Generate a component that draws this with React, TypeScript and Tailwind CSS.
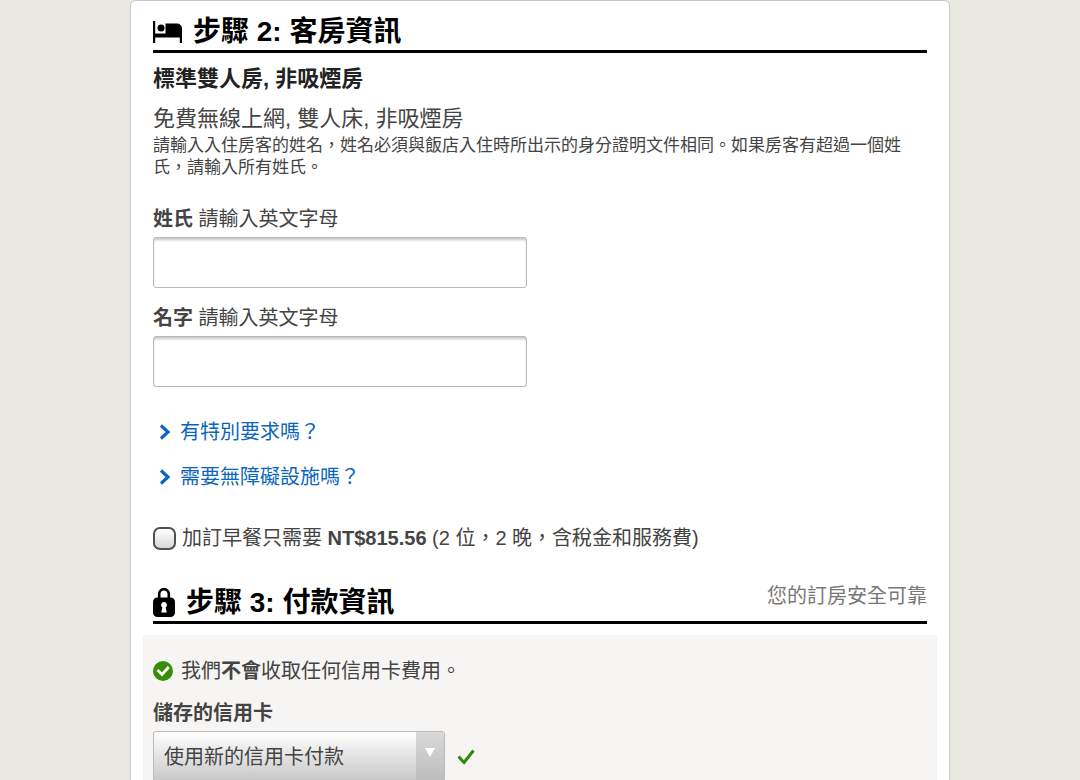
import React, { useState } from 'react';

interface StepHeaderProps {
  icon: React.ReactNode;
  title: string;
  note?: string;
}

interface NameFieldProps {
  id: string;
  label: string;
  value: string;
  onChange: (value: string) => void;
}

const BedIcon = () => (
  <svg viewBox="0 0 29 22" className="w-[29px] h-[22px]" fill="#000" aria-hidden="true">
    <path d="M0 0h2.200v12.500H12.500V2.500H24a5 5 0 0 1 5 5V22h-2.200v-5.500H2.200V22H0z" />
    <circle cx="8" cy="7" r="3.500" />
  </svg>
);

const LockIcon = () => (
  <svg viewBox="0 0 22 29" className="w-[22px] h-[29px]" aria-hidden="true">
    <path d="M6.200 11V6a4.800 4.800 0 0 1 9.600 0v5" fill="none" stroke="#000" strokeWidth="2.600" />
    <rect y="9.500" width="22" height="19.500" rx="4.500" fill="#000" />
    <path d="M11 14a3 3 0 0 1 1.600 5.500l1.200 5H8.200l1.200-5A3 3 0 0 1 11 14z" fill="#fff" />
  </svg>
);

const ChevronIcon = () => (
  <svg viewBox="0 0 12 18" className="w-3 h-[18px]" fill="none" stroke="#0a66bd" strokeWidth="3.200" aria-hidden="true">
    <path d="M2 2.500L9 9l-7 6.500" />
  </svg>
);

const CheckCircleIcon = () => (
  <svg viewBox="0 0 20 20" className="w-5 h-5" aria-hidden="true">
    <circle cx="10" cy="10" r="10" fill="#3a8d0b" />
    <path d="M4.500 9l4.500 4.500L15.800 6" fill="none" stroke="#fff" strokeWidth="2.800" />
  </svg>
);

const CheckIcon = () => (
  <svg viewBox="0 0 18 16" className="w-[18px] h-4" aria-hidden="true">
    <path d="M1.500 7.500l5.500 6L16.500 1.500" fill="none" stroke="#2e8a07" strokeWidth="3" />
  </svg>
);

const StepHeader: React.FC<StepHeaderProps> = ({ icon, title, note }) => (
  <header className="flex items-start justify-between border-b-3 border-black">
    <div className="flex items-center gap-[11px]">
      {icon}
      <h2 className="text-[28px] leading-[37px] font-bold text-black">{title}</h2>
    </div>
    {note && <span className="text-xl leading-6 text-[#777]">{note}</span>}
  </header>
);

const NameField: React.FC<NameFieldProps> = ({ id, label, value, onChange }) => (
  <div>
    <label htmlFor={id} className="block text-xl leading-6">
      <b>{label}</b> 請輸入英文字母
    </label>
    <input
      id={id}
      type="text"
      value={value}
      onChange={(e) => onChange(e.target.value)}
      className="mt-[6px] block h-[51px] w-full max-w-[374px] rounded-[3px] border border-[#b9b9b9] bg-white px-3 text-xl shadow-[inset_0_3px_3px_-1px_#c4c4c4]"
    />
  </div>
);

const ExpandLink: React.FC<{ text: string }> = ({ text }) => (
  <a href="#" className="flex items-center gap-[9px] pl-[6px] text-xl leading-6 text-[#0a66bd]">
    <ChevronIcon />
    {text}
  </a>
);

const App: React.FC = () => {
  const [lastName, setLastName] = useState('');
  const [firstName, setFirstName] = useState('');
  const [breakfast, setBreakfast] = useState(false);

  return (
    <div
      lang="zh-TW"
      className="min-h-screen bg-[#e8e8e0] text-[#444] font-['Liberation_Sans','Noto_Sans_CJK_TC',sans-serif]"
    >
      <main className="mx-auto max-w-[820px] rounded-md border border-[#c8c8c6] bg-white px-[22px] pt-3">
        <section>
          <StepHeader icon={<BedIcon />} title="步驟 2: 客房資訊" />
          <h3 className="mt-3 text-[22px] leading-7 font-bold text-[#222]">標準雙人房, 非吸煙房</h3>
          <p className="mt-3 text-[22px] leading-7">免費無線上網, 雙人床, 非吸煙房</p>
          <p className="mt-[2px] text-[17px] leading-[22px]">
            請輸入入住房客的姓名，姓名必須與飯店入住時所出示的身分證明文件相同。如果房客有超過一個姓氏，請輸入所有姓氏。
          </p>

          <div className="mt-7 flex flex-col gap-[18px]">
            <NameField id="last-name" label="姓氏" value={lastName} onChange={setLastName} />
            <NameField id="first-name" label="名字" value={firstName} onChange={setFirstName} />
          </div>

          <div className="mt-[33px] flex flex-col items-start gap-[21px]">
            <ExpandLink text="有特別要求嗎？" />
            <ExpandLink text="需要無障礙設施嗎？" />
          </div>

          <div className="mt-[37px] flex items-center gap-[6px]">
            <input
              id="breakfast"
              type="checkbox"
              checked={breakfast}
              onChange={(e) => setBreakfast(e.target.checked)}
              className="h-[23px] w-[23px] shrink-0 appearance-none rounded-[7px] border-2 border-[#505050] bg-linear-to-b from-white to-[#d8d8d8] checked:from-[#3a8d0b] checked:to-[#3a8d0b]"
            />
            <label htmlFor="breakfast" className="text-xl leading-6">
              加訂早餐只需要 <b>NT$815.56</b> (2 位，2 晚，含稅金和服務費)
            </label>
          </div>
        </section>

        <section className="mt-[34px]">
          <StepHeader icon={<LockIcon />} title="步驟 3: 付款資訊" note="您的訂房安全可靠" />
          <div className="-mx-[10px] mt-[11px] bg-[#f6f5f3] px-[10px] pt-6 pb-6">
            <p className="flex items-center gap-2 text-xl leading-6">
              <CheckCircleIcon />
              <span>
                我們<b>不會</b>收取任何信用卡費用。
              </span>
            </p>
            <label htmlFor="saved-card" className="mt-[18px] block text-xl leading-6 font-bold">
              儲存的信用卡
            </label>
            <div className="mt-[6px] flex items-center gap-3">
              <div className="relative w-full max-w-[292px]">
                <select
                  id="saved-card"
                  className="block h-[51px] w-full appearance-none rounded-[3px] border border-[#bbb] bg-linear-to-b from-white to-[#c8c8c8] pr-8 pl-[10px] text-xl"
                >
                  <option>使用新的信用卡付款</option>
                </select>
                <div className="pointer-events-none absolute inset-y-px right-px flex w-7 items-center justify-center bg-linear-to-b from-[#d9d9d9] to-[#bcbcbc]">
                  <svg viewBox="0 0 10 9" className="mb-2 w-[10px] h-[9px]" fill="#fff" aria-hidden="true">
                    <path d="M0 0h10L5 9z" />
                  </svg>
                </div>
              </div>
              <CheckIcon />
            </div>
          </div>
        </section>
      </main>
    </div>
  );
};

export default App;
